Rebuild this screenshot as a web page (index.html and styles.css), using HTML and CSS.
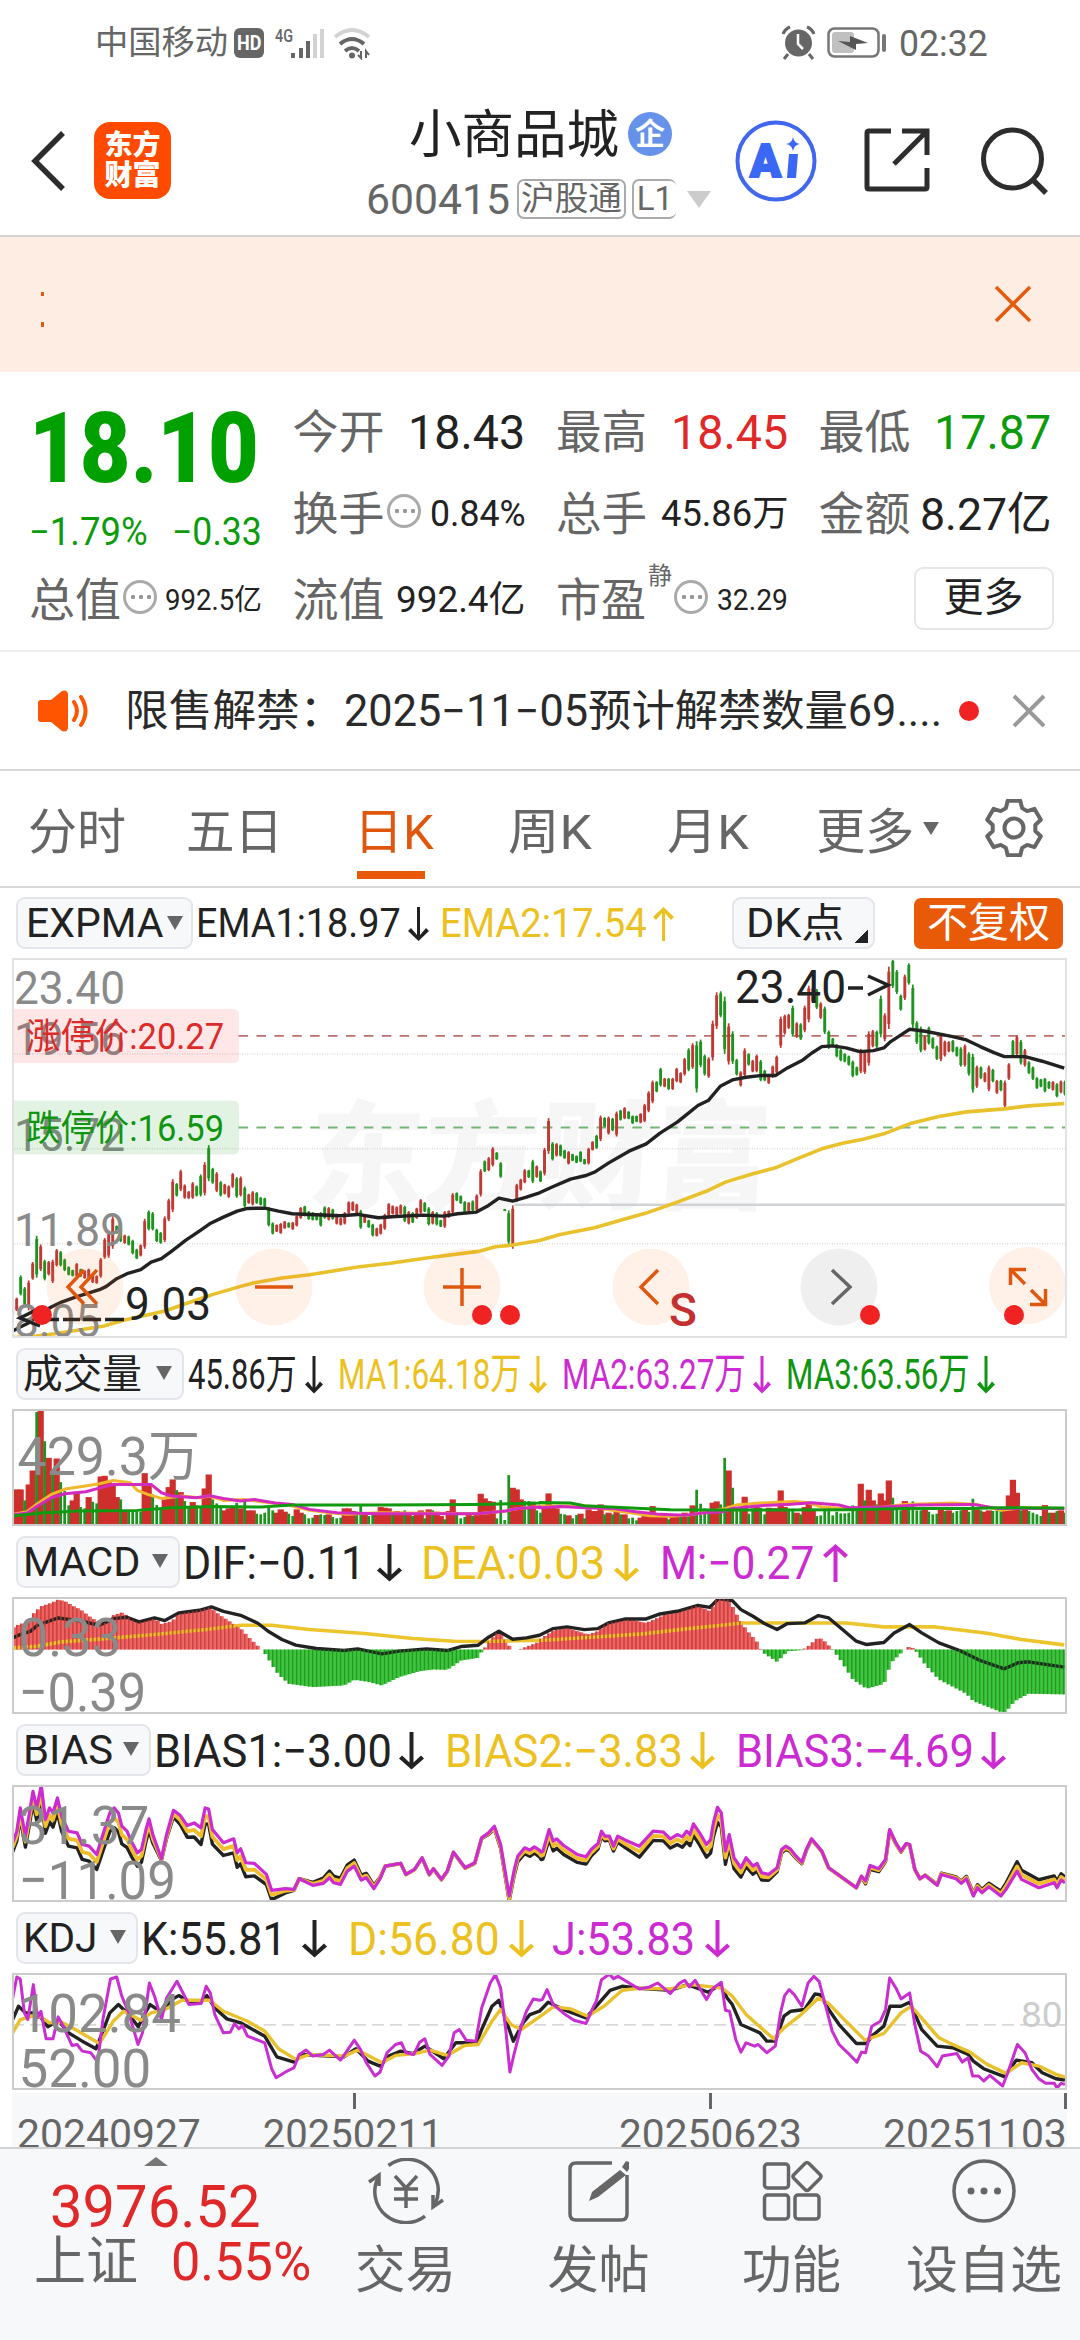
FILE: index.html
```html
<!DOCTYPE html>
<html lang="zh-CN">
<head>
<meta charset="utf-8">
<title>小商品城 600415</title>
<link rel="stylesheet" href="styles.css">
</head>
<body>
<div class="status">
  <span class="fit carrier" data-w="133">中国移动</span>
  <span class="hd"><i class="fit" data-w="24">HD</i></span>
  <svg class="net" width="100" height="38" viewBox="272 21 100 38">
    <text x="275" y="41" font-size="19" font-weight="500" textLength="18" lengthAdjust="spacingAndGlyphs" fill="#666">4G</text>
    <g fill="#666"><rect x="291" y="52" width="4" height="5"/><rect x="299" y="47" width="4" height="10"/><rect x="306" y="40" width="4" height="17"/></g>
    <g fill="#d2d2d2"><rect x="313" y="33" width="4" height="24"/><rect x="320" y="28" width="4" height="29"/></g>
    <g fill="none" stroke="#666" stroke-width="4"><path d="M335 36 Q352 22 369 36" stroke="#d2d2d2"/><path d="M340 43 Q352 33 364 43"/><path d="M345 50 Q352 44 359 50"/></g>
    <circle cx="352" cy="54.500" r="3" fill="#666"/><path d="M361 50v7l-3-3M366 57v-7l3 4" fill="none" stroke="#666" stroke-width="2"/>
  </svg>
  <svg class="power" width="108" height="36" viewBox="780 25 108 36">
    <circle cx="798.500" cy="43" r="13.500" fill="#666"/><path d="M798 34v10l5 5" stroke="#fff" stroke-width="2.500" fill="none"/>
    <path d="M783 34q2-5 7-7M814 34q-2-5-7-7M788 54l-4 5M809 54l4 5" stroke="#666" stroke-width="3" fill="none"/>
    <rect x="828.500" y="28.500" width="50" height="28" rx="6" fill="none" stroke="#777" stroke-width="2.500"/><rect x="832" y="32" width="22" height="21" rx="3" fill="#c0c0c0"/>
    <path d="M838 41l12 1v-6l18 7-12 1 0 6z" fill="#555"/><path d="M884 36v14" stroke="#777" stroke-width="4" stroke-linecap="round"/>
  </svg>
  <span class="fit clock" data-w="89">02:32</span>
</div>

<header class="head">
  <svg class="back" width="40" height="66" viewBox="0 0 40 66"><path d="M34 5 6 33 34 61" fill="none" stroke="#2d2d2d" stroke-width="5.500"/></svg>
  <div class="logo"><span>东方</span><span>财富</span></div>
  <div class="title">
    <div class="name"><span class="fit" data-w="210">小商品城</span><i class="ent">企</i></div>
    <div class="code"><span class="fit" data-w="144">600415</span><span class="tag"><span class="fit" data-w="101">沪股通</span></span><span class="tag cut"><span class="fit" data-w="36">L1</span></span><i class="tri"></i></div>
  </div>
  <svg class="ai" width="82" height="82" viewBox="0 0 82 82"><circle cx="41" cy="41" r="38.500" fill="#fff" stroke="#4067ee" stroke-width="4"/><text x="15" y="57" font-size="46" font-weight="900" textLength="31" lengthAdjust="spacingAndGlyphs" fill="#3a68f5" stroke="#3a68f5" stroke-width="2">A</text><path d="M54 34h9l-2 24h-9z" fill="#3a68f5"/><path d="M58 17q1 6 7 7-6 1-7 7-1-6-7-7 6-1 7-7z" fill="#3a68f5"/></svg>
  <svg class="share" width="70" height="70" viewBox="0 0 70 70"><path d="M28 5H6q-2 0-2 2V61q0 2 2 2H62q2 0 2-2V42M39 5H64V29M63 6 31 38" fill="none" stroke="#2d2d2d" stroke-width="5"/></svg>
  <svg class="search" width="70" height="70" viewBox="0 0 70 70"><circle cx="32.500" cy="33" r="29" fill="none" stroke="#2d2d2d" stroke-width="5"/><path d="M53 54 66 67" stroke="#2d2d2d" stroke-width="5.500"/></svg>
</header>

<div class="banner">
  <i class="marquee"></i>
  <svg width="38" height="38" viewBox="0 0 38 38"><path d="M2 2 36 36M36 2 2 36" stroke="#e55a0d" stroke-width="3.500"/></svg>
</div>

<section class="quote">
  <div class="price"><b class="fit" data-w="230">18.10</b></div>
  <div class="q r1"><span class="fit lab" data-w="92">今开</span><span class="fit num" data-w="117">18.43</span></div>
  <div class="q r1"><span class="fit lab" data-w="91">最高</span><span class="fit num up" data-w="117">18.45</span></div>
  <div class="q r1"><span class="fit lab" data-w="92">最低</span><span class="fit num down" data-w="117">17.87</span></div>
  <div class="q delta down"><span class="fit" data-w="119">−1.79%</span><span class="fit" data-w="90">−0.33</span></div>
  <div class="q r2"><span class="fit lab" data-w="92">换手</span><i class="info"></i><span class="fit n36" data-w="96">0.84%</span></div>
  <div class="q r2"><span class="fit lab" data-w="91">总手</span><span class="fit n36" data-w="127">45.86万</span></div>
  <div class="q r2"><span class="fit lab" data-w="92">金额</span><span class="fit n46" data-w="132">8.27亿</span></div>
  <div class="q r3"><span class="fit lab" data-w="92">总值</span><i class="info"></i><span class="fit n28" data-w="97">992.5亿</span></div>
  <div class="q r3"><span class="fit lab" data-w="92">流值</span><span class="fit n36" data-w="129">992.4亿</span></div>
  <div class="q r3"><span class="fit lab" data-w="90">市盈</span><sup>静</sup><i class="info"></i><span class="fit n28" data-w="71">32.29</span></div>
  <div class="q r3 right"><button class="more">更多</button></div>
</section>

<div class="notice">
  <svg class="horn" width="52" height="42" viewBox="0 0 52 42"><path d="M3 10h10L24 1q5-2 6 3v34q-1 5-6 3L13 32H3q-3 0-3-3V13q0-3 3-3z" fill="#ff5500"/><path d="M36 12q6 9 0 18M43 7q9 14 0 28" fill="none" stroke="#ff5500" stroke-width="4" stroke-linecap="round"/></svg>
  <span class="fit headline" data-w="219">限售解禁：</span><span class="fit headline" data-w="598">2025−11−05预计解禁数量69....</span>
  <i class="dot"></i>
  <svg width="34" height="34" viewBox="0 0 34 34"><path d="M2 2 32 32M32 2 2 32" stroke="#999" stroke-width="4"/></svg>
</div>

<nav class="tabs">
  <span class="fit" data-w="98">分时</span><span class="fit" data-w="97">五日</span><span class="on"><span class="fit" data-w="80">日K</span></span><span class="fit" data-w="84">周K</span><span class="fit" data-w="82">月K</span>
  <span class="drop"><span class="fit" data-w="98">更多</span><i class="tri"></i></span>
  <svg width="58" height="58" viewBox="0 0 58 58"><path d="M22.700 1.700H35.300L37.100 9.100 42.200 12.100 49.500 9.900 55.800 20.800 50.300 26V32L55.800 37.200 49.500 48.100 42.200 45.900 37.100 48.900 35.300 56.300H22.700L20.900 48.900 15.800 45.900 8.500 48.100 2.200 37.200 7.700 32V26L2.200 20.800 8.500 9.900 15.800 12.100 20.900 9.100z" fill="none" stroke="#666" stroke-width="4" stroke-linejoin="round"/><circle cx="29" cy="29" r="9.500" fill="none" stroke="#666" stroke-width="4"/></svg>
</nav>

<main class="charts">
  <div class="row expma">
    <span class="pill p0"><span class="fit" data-w="137">EXPMA</span><i class="tri"></i></span>
    <span class="val e1"><span class="fit" data-w="205">EMA1:18.97</span><i class="arr"></i></span>
    <span class="val e2 yel"><span class="fit" data-w="207">EMA2:17.54</span><i class="arr upw"></i></span>
    <span class="pill dk"><span class="fit" data-w="98">DK点</span></span>
    <span class="adj"><span class="fit" data-w="123">不复权</span></span>
  </div>
  <div class="plot main">
    <svg class="layer" id="kline" viewBox="36 52 3064 1141" preserveAspectRatio="none"></svg>
    <svg class="layer" viewBox="12 958 1055 380">
      <g fill="#8a8a8a" font-size="47">
        <text x="14" y="1004" textLength="111" lengthAdjust="spacingAndGlyphs">23.40</text><text x="14" y="1055" textLength="111" lengthAdjust="spacingAndGlyphs">19.56</text>
        <text x="14" y="1151" textLength="111" lengthAdjust="spacingAndGlyphs">15.72</text><text x="14" y="1246" textLength="111" lengthAdjust="spacingAndGlyphs">11.89</text>
        <text x="14" y="1337" textLength="86" lengthAdjust="spacingAndGlyphs">8.05</text>
      </g>
      <path d="M12 1009H233q6 0 6 6v42q0 6-6 6H12z" fill="#ff2020" opacity=".11"/><path d="M12 1100.500H233q6 0 6 6v42q0 6-6 6H12z" fill="#10a020" opacity=".12"/>
      <g font-size="36"><text x="26" y="1049" textLength="198" lengthAdjust="spacingAndGlyphs" fill="#dd2a2a">涨停价:20.27</text><text x="26" y="1141" textLength="198" lengthAdjust="spacingAndGlyphs" fill="#109510">跌停价:16.59</text></g>
      <text x="125" y="1320" font-size="47" textLength="86" lengthAdjust="spacingAndGlyphs" fill="#222">9.03</text>
      <path d="M40 1308 20 1318 40 1326M45 1319.500H59M63 1319.500H80M83 1319.500H101M105 1319.500H124" fill="none" stroke="#222" stroke-width="3.500"/>
      <text x="735" y="1003" font-size="47" textLength="111" lengthAdjust="spacingAndGlyphs" fill="#222">23.40</text><path d="M848 988H863M868 976 888 985 868 995" fill="none" stroke="#222" stroke-width="3.500"/>
      <g fill="#ff6a20" fill-opacity=".1"><circle cx="85" cy="1287" r="38.500"/><circle cx="274" cy="1287" r="38.500"/><circle cx="462" cy="1287" r="38.500"/><circle cx="651" cy="1287" r="38.500"/><circle cx="839" cy="1287" r="38.500" fill="#666"/><path d="M1066 1287A38.500 38.500 0 1 1 1066 1284z"/></g>
      <g fill="none" stroke="#e0580f" stroke-width="3.500"><path d="M84 1270 68 1287 84 1304M97 1270 81 1287 97 1304M255 1287H293M443 1287H481M462 1268V1306M658 1270 641 1287 658 1304M1026 1269.500H1010.500V1285M1011 1270 1025 1284M1030 1304.500H1045.500V1289M1045 1304 1031 1290"/><path d="M832 1270 850 1287 832 1304" stroke="#666"/></g>
      <g fill="#f02222"><circle cx="42" cy="1315" r="10"/><circle cx="482" cy="1315" r="10"/><circle cx="510" cy="1315" r="10"/><circle cx="870" cy="1315" r="10"/><circle cx="1014" cy="1315" r="10"/></g>
      <text x="669" y="1326" font-size="46" font-weight="500" fill="#c43030">S</text>
    </svg>
  </div>

  <div class="row">
    <span class="pill p1"><span class="fit" data-w="119">成交量</span><i class="tri"></i></span>
    <span class="val v0"><span class="fit" data-w="109">45.86万</span><i class="arr sm"></i></span>
    <span class="val v1 yel"><span class="fit" data-w="184">MA1:64.18万</span><i class="arr sm"></i></span>
    <span class="val v1 mag"><span class="fit" data-w="184">MA2:63.27万</span><i class="arr sm"></i></span>
    <span class="val v1 grn"><span class="fit" data-w="184">MA3:63.56万</span><i class="arr sm"></i></span>
  </div>
  <div class="plot sub"><svg class="layer" id="vol" viewBox="36 13 3064 352" preserveAspectRatio="none"></svg>
    <svg class="layer" viewBox="12 1409 1055 118"><text x="13" y="1476" font-size="55" textLength="184" lengthAdjust="spacingAndGlyphs" fill="#8a8a8a">429.3万</text></svg></div>

  <div class="row">
    <span class="pill p2"><span class="fit" data-w="117">MACD</span><i class="tri"></i></span>
    <span class="val m1"><span class="fit" data-w="182">DIF:−0.11</span><i class="arr"></i></span>
    <span class="val m2 yel"><span class="fit" data-w="184">DEA:0.03</span><i class="arr"></i></span>
    <span class="val m3 mag"><span class="fit" data-w="154">M:−0.27</span><i class="arr upw"></i></span>
  </div>
  <div class="plot sub"><svg class="layer" id="macd" viewBox="36 577 3064 352" preserveAspectRatio="none"></svg>
    <svg class="layer" viewBox="12 1597 1055 118"><g font-size="55" fill="#8a8a8a"><text x="14" y="1657" textLength="104" lengthAdjust="spacingAndGlyphs">0.33</text><text x="14" y="1712" textLength="129" lengthAdjust="spacingAndGlyphs">−0.39</text></g></svg></div>

  <div class="row">
    <span class="pill p3"><span class="fit" data-w="90">BIAS</span><i class="tri"></i></span>
    <span class="val b1"><span class="fit" data-w="238">BIAS1:−3.00</span><i class="arr"></i></span>
    <span class="val b2 yel"><span class="fit" data-w="238">BIAS2:−3.83</span><i class="arr"></i></span>
    <span class="val b2 mag"><span class="fit" data-w="238">BIAS3:−4.69</span><i class="arr"></i></span>
  </div>
  <div class="plot sub"><svg class="layer" id="bias" viewBox="36 16 3064 352" preserveAspectRatio="none"></svg>
    <svg class="layer" viewBox="12 1785 1055 118"><g font-size="55" fill="#8a8a8a"><text x="14" y="1845" textLength="132" lengthAdjust="spacingAndGlyphs">31.37</text><text x="14" y="1900" textLength="159" lengthAdjust="spacingAndGlyphs">−11.09</text></g></svg></div>

  <div class="row">
    <span class="pill p4"><span class="fit" data-w="74">KDJ</span><i class="tri"></i></span>
    <span class="val k1"><span class="fit" data-w="146">K:55.81</span><i class="arr"></i></span>
    <span class="val k2 yel"><span class="fit" data-w="152">D:56.80</span><i class="arr"></i></span>
    <span class="val k3 mag"><span class="fit" data-w="143">J:53.83</span><i class="arr"></i></span>
  </div>
  <div class="plot sub"><svg class="layer" id="kdj" viewBox="36 580 3064 352" preserveAspectRatio="none"></svg>
    <svg class="layer" viewBox="12 1973 1055 118"><g font-size="55" fill="#8a8a8a"><text x="14" y="2033" textLength="164" lengthAdjust="spacingAndGlyphs">102.84</text><text x="14" y="2088" textLength="134" lengthAdjust="spacingAndGlyphs">52.00</text></g><text x="1025" y="2027" font-size="35" textLength="42" lengthAdjust="spacingAndGlyphs" fill="#ccc">80</text></svg></div>

  <div class="axis">
    <span class="fit" data-w="184">20240927</span><span class="mid a"><span class="fit" data-w="180">20250211</span></span><span class="mid b"><span class="fit" data-w="183">20250623</span></span><span class="end"><span class="fit" data-w="184">20251103</span></span>
  </div>
</main>

<footer class="bar">
  <div class="index">
    <i class="caret"></i>
    <b class="fit pts" data-w="211">3976.52</b>
    <div class="idx"><span class="fit" data-w="104">上证</span><b class="fit" data-w="140">0.55%</b></div>
  </div>
  <a class="act"><svg width="76" height="66" viewBox="368 2158 76 66"><g fill="none" stroke="#666" stroke-width="3.500"><path d="M388.500 2165.500A31 31 0 0 1 435 2204"/><path d="M425 2216A31 31 0 0 1 378.500 2177"/><path d="M369 2182 379 2175V2186M443 2200 433 2207V2195"/><path d="M395 2176 406 2188 417 2176M394 2189H418M394 2199H418M406 2188V2208"/></g></svg><span class="fit" data-w="101">交易</span></a>
  <a class="act"><svg width="66" height="66" viewBox="566 2158 66 66"><path d="M612 2163H576q-6 0-6 6V2214q0 6 6 6H621q6 0 6-6V2175" fill="none" stroke="#666" stroke-width="3.500"/><path d="M620 2170 626 2175 598 2197 589 2201 592 2192zM622 2167l4-6 3 1v7l-2 3z" fill="#666"/></svg><span class="fit" data-w="102">发帖</span></a>
  <a class="act"><svg width="66" height="66" viewBox="758 2158 66 66"><g fill="none" stroke="#666" stroke-width="3.500"><rect x="763.500" y="2164" width="24" height="24" rx="3"/><rect x="763.500" y="2195" width="24" height="24" rx="3"/><rect x="794" y="2195" width="24" height="24" rx="3"/><path d="M804 2163.500q2-2 4 0l11 11q2 2 0 4l-11 11q-2 2-4 0l-11-11q-2-2 0-4z"/></g></svg><span class="fit" data-w="99">功能</span></a>
  <a class="act"><svg width="66" height="66" viewBox="950 2158 66 66"><circle cx="983" cy="2191" r="30" fill="none" stroke="#666" stroke-width="3.500"/><g fill="#666"><circle cx="970" cy="2191" r="3.500"/><circle cx="983" cy="2191" r="3.500"/><circle cx="996.500" cy="2191" r="3.500"/></g></svg><span class="fit" data-w="156">设自选</span></a>
</footer>
<script src="script.js"></script>
</body>
</html>
```
FILE: styles.css
```css
* { box-sizing: border-box; }
body { margin: 0; width: 1080px; height: 2340px; overflow: hidden; background: #fff; color: #222; font-family: Roboto, "Noto Sans CJK SC", sans-serif; display: flex; flex-direction: column; line-height: 1; }
i, sup { font-style: normal; }
svg text { font-family: Roboto, "Noto Sans CJK SC", sans-serif; }
.fit { display: inline-block; flex: none; white-space: nowrap; transform-origin: 0 50%; }
.up { color: #e02828; }
.down { color: #0b9b0b; }
.yel { color: #ecc11f; }
.mag { color: #cb2bd0; }
.grn { color: #109510; }
.tri { display: inline-block; width: 0; height: 0; border: 9px solid transparent; border-bottom: 0; border-top: 14px solid #666; }

.status { height: 86px; flex: none; display: flex; align-items: center; padding-left: 95px; color: #666; }
.carrier { font-size: 33px; line-height: 1.5; }
.hd { width: 30px; height: 30px; margin-left: 6px; border-radius: 6px; background: #666; color: #fff; font-size: 21px; font-weight: 700; display: flex; align-items: center; justify-content: center; }
.net { margin: -4px 0 0 8px; }
.power { margin-left: 408px; }
.clock { font-size: 36px; margin-left: 11px; padding-top: 1px; }

.head { height: 151px; flex: none; display: flex; border-bottom: 2px solid #d2d2d2; }
.back { margin: 42px 0 0 29px; }
.logo { width: 77px; height: 77px; margin: 36px 0 0 25px; border-radius: 16px; background: #ff4a00; color: #fff; font-size: 28px; font-weight: 900; display: flex; flex-direction: column; align-items: center; justify-content: center; gap: 2px; }
.title { margin-left: 195px; width: 346px; }
.name { display: flex; margin: 24px 0 0 43px; font-size: 52px; }
.ent { width: 44px; height: 44px; border-radius: 50%; background: #6792ea; color: #fff; font-size: 30px; font-weight: 700; margin: 2px 0 0 9px; display: flex; align-items: center; justify-content: center; }
.code { display: flex; align-items: center; height: 44px; margin-top: 15px; color: #666; font-size: 43px; }
.tag { height: 40px; width: 109px; margin-left: 7px; border: 2px solid #aaa; border-radius: 7px; font-size: 33px; display: flex; align-items: center; justify-content: center; padding-bottom: 2px; }
.tag.cut { width: 44px; margin-left: 6px; border-right: 0; }
.code .tri { border-width: 17px 12px 0; border-top-color: #ccc; margin-left: 11px; }
.ai { margin: 34px 0 0 23px; }
.share { margin: 40px 0 0 46px; }
.search { margin: 40px 0 0 47px; }

.banner { height: 135px; flex: none; background: #fdede3; display: flex; align-items: center; justify-content: space-between; padding: 0 48px 2px 41px; }
.marquee { width: 3px; height: 35px; border-top: 4px solid #e55a0d; border-bottom: 5px solid #e55a0d; margin-top: 12px; }

.quote { height: 280px; flex: none; border-bottom: 2px solid #eee; display: grid; grid-template-columns: 233px 233px 232px 233px; column-gap: 30.500px; grid-template-rows: 100px 84px 84px; padding-left: 29px; align-items: center; }
.price { color: #00a000; font-size: 98px; font-weight: 700; padding: 28px 0 0; height: 131px; align-self: start; }
.q { display: flex; align-items: center; justify-content: space-between; }
.r1, .r2, .r3 { height: 84px; }
.r1 { margin-top: 20px; }
.r3 { margin-top: 4px; }
.lab { color: #666; font-size: 46px; }
.num { font-size: 49px; }
.n46 { font-size: 45px; }
.n36 { font-size: 36px; }
.n28 { font-size: 29px; }
.delta { font-size: 38px; padding-top: 35px; }
.info { width: 34px; height: 34px; flex: none; border: 3px solid #aaa; border-radius: 50%; margin: -6px auto 0 2px; background: radial-gradient(circle, #999 2px, transparent 2.500px) 3px 0 / 8px 28px; background-repeat: repeat-x; background-clip: content-box; padding: 0 2px; }
sup { font-size: 24px; color: #666; align-self: flex-start; margin: 6px 0 0 2px; line-height: 1; }
.right { justify-content: flex-end; }
.more { width: 140px; height: 63px; margin: -4px -2px 0 0; border: 2px solid #e6e6e6; border-radius: 9px; background: #fff; color: #222; font: 40px/1 Roboto, "Noto Sans CJK SC", sans-serif; padding: 0; }

.notice { height: 119px; flex: none; border-bottom: 2px solid #d8d8d8; display: flex; align-items: center; padding-left: 38px; }
.horn { margin-right: 35px; }
.headline { font-size: 43.500px; color: #2a2a2a; padding-top: 2px; }
.dot { width: 20px; height: 20px; border-radius: 50%; background: #f02222; margin: 0 33px 0 17px; }

.tabs { height: 117px; flex: none; border-bottom: 2px solid #d8d8d8; display: flex; align-items: center; padding: 7px 0 0 28px; color: #666; font-size: 49px; }
.tabs > * + * { margin-left: 60px; }
.on { color: #e0560c; height: 108px; display: flex; align-items: center; margin-left: 71px !important; background: linear-gradient(#e85808, #e85808) 3px 93px / 68px 8px no-repeat; }
.on + .fit { margin-left: 74px !important; }
.on + .fit + .fit { margin-left: 75px !important; }
.drop { display: flex; align-items: center; margin-left: 68px !important; }
.drop .tri { margin: -8px 0 0 9px; border-width: 13px 8px 0; }
.tabs svg { margin: -8px 0 0 46px !important; }

.charts { width: 1067px; padding-left: 12px; flex: none; }
.row { height: 71px; display: flex; align-items: center; font-size: 46px; }
.expma { height: 70px; font-size: 40px; }
.main { height: 380px; }
.sub { height: 117px; }
.plot { position: relative; }
.plot::after { content: ""; position: absolute; inset: 0; border: 2px solid #ccc; }
.main::after { border-color: #e2e2e2; }
.layer { position: absolute; left: 0; top: 0; width: 1055px; height: 100%; }
.pill { height: 52px; flex: none; margin-left: 4px; padding: 2px 10px 0 5px; border: 2px solid #e4e5ea; border-radius: 9px; background: #f7f8fa; font-size: 40px; display: flex; align-items: center; justify-content: space-between; }
.p0 { width: 177px; padding-left: 8px; }
.p1 { width: 168px; }
.p2 { width: 164px; }
.p3 { width: 135px; }
.p4 { width: 122px; }
.pill .tri { border-width: 14px 8.500px 0; margin-top: -3px; }
.p0 .tri { margin-right: -2px; }
.val { display: flex; flex: none; align-items: center; justify-content: space-between; margin-left: 4px; padding-top: 2px; }
.v0 { width: 135px; font-size: 42px; }
.v1 { width: 209px; margin-left: 15px; font-size: 43px; }
.e1 { width: 235px; margin-left: 3px; }
.e2 { width: 236px; margin-left: 9px; }
.m1 { width: 219px; margin-left: 3px; }
.m2 { width: 218px; margin-left: 19px; }
.m3 { width: 188px; margin-left: 21px; }
.b1 { width: 270px; margin-left: 3px; }
.b2 { width: 270px; margin-left: 21px; }
.k1 { width: 186px; margin-left: 3px; }
.k2 { width: 186px; margin-left: 21px; }
.k3 { width: 178px; margin-left: 18px; }
.arr { width: 25px; height: 38px; flex: none; background: currentColor; clip-path: polygon(10.500px 0, 14.500px 0, 14.500px 31px, 22px 24px, 25px 27px, 12.500px 38px, 0 27px, 3px 24px, 10.500px 31px); }
.arr.upw { transform: scaleY(-1); }
.expma .arr { height: 34px; clip-path: polygon(11px 0, 14px 0, 14px 28px, 20px 21px, 23px 24px, 12.500px 34px, 2px 24px, 5px 21px, 11px 28px); }
.arr.sm { width: 18px; clip-path: polygon(7.500px 0, 10.500px 0, 10.500px 32px, 15px 26px, 18px 29px, 9px 38px, 0 29px, 3px 26px, 7.500px 32px); }
.dk { width: 143px; margin-left: 56px; padding-left: 12px; background: linear-gradient(135deg, transparent 50%, #222 51%) 120px 30px / 14px 14px no-repeat #f7f8fa; }
.adj { width: 149px; height: 51px; flex: none; margin-left: 39px; border-radius: 7px; background: #e85a08; color: #fff; font-size: 41px; display: flex; align-items: center; justify-content: center; }
.axis { height: 57px; overflow: hidden; display: flex; padding-top: 25px; font-size: 40px; color: #666; background: linear-gradient(#666, #666) 341px 3px / 3px 16px no-repeat, linear-gradient(#666, #666) 697px 3px / 3px 16px no-repeat, linear-gradient(#666, #666) 1052px 3px / 3px 16px no-repeat, linear-gradient(#f7f8fa, #f7f8fa) 0 3px / 100% 100% no-repeat; }
.axis > :first-child { margin-left: 5px; }
.mid.a { margin-left: 62px; }
.mid.b { margin-left: 176px; }
.end { margin-left: 81px; }

.bar { flex: 1; border-top: 2px solid #d0d2d4; background: #f7f8fa; display: flex; color: #666; font-size: 51px; }
.bar b { font-weight: 400; color: #e02828; }
.index { width: 310px; padding-left: 34px; display: flex; flex-direction: column; }
.caret { width: 0; border: 12px solid transparent; border-top: 0; border-bottom: 9px solid #777; margin: 8px 0 0 110px; }
.pts { font-size: 59px; margin: 11px 0 0 16px; align-self: flex-start; }
.idx { display: flex; align-items: center; justify-content: space-between; margin-right: -2px; font-size: 53px; }
.act { display: flex; flex-direction: column; align-items: center; width: 193px; padding-top: 9px; gap: 21px; flex: none; }
.act:last-child { width: 192px; }
```
FILE: script.js
```js
(function () {
// Fit each label to the width of its column.
document.querySelectorAll('.fit').forEach(function (el) {
  var w = +el.dataset.w, n = el.offsetWidth;
  el.style.transform = 'scaleX(' + w / n + ')';
  el.style.marginRight = (w - n) + 'px';
});

var RED = '#bf3a35', GREEN = '#1f931f', HALF = 1568;

function put(id, html) { document.getElementById(id).innerHTML += html; }
function rect(x, y, w, h, f) { return '<rect x="' + x.toFixed(1) + '" y="' + y + '" width="' + w + '" height="' + h + '" fill="' + f + '"/>'; }
function points(left, right) {
  function read(s, dx) { return s.trim().split(/\s+/).map(function (p) { p = p.split(','); return [+p[0] + dx, +p[1]]; }); }
  return read(left, 0).concat(read(right, HALF));
}
function line(pts, color, w, extra) {
  return '<polyline points="' + pts.map(function (p) { return p[0] + ',' + p[1].toFixed(1); }).join(' ') + '" fill="none" stroke="' + color + '" stroke-width="' + w + '" stroke-linejoin="round" vector-effect="non-scaling-stroke" ' + (extra || '') + '/>';
}
function at(pts, x) {
  for (var i = 1; i < pts.length; i++) if (pts[i][0] >= x) {
    var a = pts[i - 1], b = pts[i];
    return a[1] + (b[1] - a[1]) * Math.max(0, (x - a[0]) / (b[0] - a[0] || 1));
  }
  return pts[pts.length - 1][1];
}
function hline(y, x1, color, w, dash) { return line([[x1, y], [3100, y]], color, w, dash ? 'stroke-dasharray="' + dash + '"' : ''); }
function spread(list, x0, x1, fn) {
  list = list.trim().split(/\s+/);
  return list.map(function (t, i) { return fn(x0 + (x1 - x0) * i / (list.length - 1), t); }).join('');
}

// Daily candles
var k1 = 'r1095-1125 r1072-1112 g1005-1065 g1040-1100 r1020-1110 r965-1018 g886-1012 r912-992 g958-1020 r962-1005 r958-1028 r926-978 g932-978 g955-992 g978-1005 g988-1008 r968-1010 g985-1010 r990-1015 r985-1018 r998-1028 r1005-1030 r953-1012 r893-955 r870-952 r828-925 g855-880 g860-905 r883-910 g886-915 g898-942 g925-956 r912-948 r835-925 g810-870 g815-870 g865-905 g875-910 r828-905 r775-842 r716-815 g728-768 r688-752 r732-775 r752-775 r725-775 g735-768 g702-768 r665-765 g614-722 g682-730 r695-755 g722-768 r730-762 r735-772 r698-742 g710-772 r708-768 g738-802 r760-790 r752-795 g755-790 g770-795 g772-800 g800-858 g846-882 r852-875 r848-880 r842-865 g846-862 r845-868 r825-858 r800-835 g796-828 g812-838 g815-840 g818-840 g815-858 g798-835 r800-840 g805-838 r820-852 r832-855 r815-852 r783-820 r783-812 r790-825 g808-865 r828-848 g838-862 g850-888 r862-888 r850-882 r820-868 r788-828 r795-822 r798-825 r792-822 g796-845 r812-852 g815-848 r802-835 r776-820 g785-815 g800-855 r812-852 g815-855 g838-860 r812-862 r810-832 r758-820 g756-782 g765-790 g782-818 r785-815 g780-812 r762-812 r686-768 g660-695 r650-692 r620-678 g635-658 g665-712 g806-812 g810-912 r795-925 r730-785 r715-750 r686-728 g688-712 g658-728 r675-712';
var k2 = 'g690-725 r622-705 r533-640 g605-660 r608-648 g612-648 g628-655 r632-672 g640-662 g645-668 g632-665 g655-672 r622-672 r602-630 g583-625 r525-602 g530-560 r528-582 g532-572 r513-588 g508-540 r500-536 g512-536 g525-550 g525-545 r518-548 r490-545 r452-515 r420-488 g422-455 g382-438 r412-440 g412-448 r412-448 r382-425 r395-428 r352-405 g323-392 r308-385 g302-456 g297-380 g342-405 r350-412 r240-360 r155-265 g152-230 g168-340 r248-372 g272-370 g355-405 r392-438 r323-410 g338-375 r358-395 r342-395 g358-422 g388-422 r400-430 r375-412 r345-400 r228-322 r222-282 r220-265 g195-288 r245-292 g248-298 r195-275 r135-245 r140-185 g145-205 r185-235 g198-280 g270-325 g292-318 g310-350 g325-362 g338-365 g345-375 g360-410 g378-405 r325-398 r330-400 r272-375 r268-320 g270-322 g165-290 r218-302 r78-265 g54-142 g88-160 g162-210 r102-178 g68-132 g132-262 g242-310 g258-335 r285-330 g258-312 g290-325 g315-358 r280-362 r300-348 r302-335 g298-335 g318-348 g320-378 r312-378 g335-405 g340-456 r375-442 g378-415 r395-425 r375-452 g385-425 r418-460 g418-452 r420-502 r368-418 g298-350 r285-345 g298-372 r325-378 g362-400 g378-418 g410-445 g415-440 g412-455 g422-445 r422-450 g428-470 r420-458 g420-465';
function candle(x, t) {
  var c = t[0] === 'r' ? RED : GREEN, p = t.slice(1).split('-'), hi = +p[0], h = p[1] - hi;
  return rect(x - 2.5, hi, 5, h, c) + rect(x - 4.2, hi + h * 0.08, 8.4, h * 0.84, c);
}
put('kline',
  '<text transform="translate(890 778) skewX(-3)" font-size="355" font-weight="900" textLength="1345" lengthAdjust="spacingAndGlyphs" fill="#f6f6f6">东方财富</text>' +
  hline(340, 36, '#ccc', 1, '1 1.5') + hline(625, 36, '#ccc', 1, '1 1.5') + hline(910, 36, '#ccc', 1, '1 1.5') +
  hline(793, 1495, '#d0d3d6', 2.5) +
  hline(286, 694, '#b8706c', 1.8, '9.5 8.4') + hline(561, 694, '#74b674', 1.8, '9.5 8.4') +
  spread(k1, 38, 1560, candle) + spread(k2, HALF + 3, HALF + 1526, candle) +
  line(points('38,1192 100,1188 160,1180 300,1158 360,1140 480,1112 540,1090 620,1062 700,1038 740,1027 820,1013 900,1003 1040,980 1140,968 1240,953 1390,933 1440,919 1490,914 1568,900',
    '0,900 60,882 160,862 240,838 310,818 400,785 490,750 540,725 620,700 690,680 760,650 820,625 880,608 940,596 1000,580 1080,548 1160,528 1240,514 1350,505 1420,496 1524,489'), '#e8c12c', 3.6) +
  line(points('38,1172 60,1160 90,1145 110,1125 150,1100 180,1085 220,1070 290,1048 310,1038 340,1015 370,1000 410,988 440,965 470,955 500,932 540,900 580,872 610,850 650,830 690,812 720,804 770,803 810,812 850,820 900,822 990,826 1040,822 1100,832 1150,828 1230,824 1290,827 1330,820 1385,815 1420,795 1450,773 1490,782 1530,770 1568,757',
    '0,757 40,738 90,716 135,705 160,695 200,668 260,632 310,610 350,578 400,545 430,520 460,495 490,480 525,437 560,418 600,410 640,405 685,405 720,382 765,358 790,338 820,318 850,316 890,322 930,333 970,330 1000,322 1020,303 1050,283 1075,266 1120,272 1160,280 1200,288 1240,298 1280,318 1320,336 1350,348 1410,348 1460,362 1524,383'), '#222', 3.4));

// Volume
var v1 = 'r330 r255 r255 g288 r240 r198 g22 r15 g110 r160 g200 r162 g233 g260 g303 r288 r262 g308 g312 r278 g292 g297 r216 r214 r232 r238 r278 g285 r320 g320 g322 g322 g322 r206 r240 g270 g302 g312 r285 r248 r225 g257 r263 g290 g305 r293 g303 g308 r252 r210 g285 g297 g305 r318 r312 r308 g295 r312 g283 r318 r318 g328 g330 g325 g305 g318 r325 r315 r322 g328 g335 r315 r325 g330 g342 g340 r332 g330 g332 r330 g338 g342 g340 r312 r312 r320 g322 g305 r332 g335 g330 r325 r308 r310 r312 g322 r320 r322 g318 r325 g335 r330 r318 g342 r315 g318 r322 r335 g345 r320 r285 g332 g342 g338 r330 g335 r325 r268 r282 r290 r292 g342 g287 g347 g212 r250 r255 r285 g290 g290 r292 g318';
var v2 = 'g325 r305 r267 r305 r312 g328 g330 r333 g342 g332 r328 g342 r315 r320 r320 r300 g330 r325 g330 r322 g330 r330 g342 g340 g348 r340 r335 r325 r305 r332 r335 r338 g345 r332 r332 g335 r325 g330 r303 g256 g298 g312 g315 r295 r291 g300 g160 r198 g250 g310 g312 r277 g328 g312 r308 g310 g330 r310 r312 r312 r258 r308 g318 g320 r325 g330 r308 r292 r318 g335 g333 g318 g320 g333 g322 g327 g327 g325 g303 g318 r238 g288 r256 r288 g300 r267 r288 r228 g280 g312 g318 r290 g312 g291 g318 g318 r315 g322 g330 g328 r315 g320 r318 g325 g320 g318 r312 g322 g283 r315 g318 r322 r318 g320 g318 g320 r315 r273 r226 r265 g318 r312 g320 g325 g330 g335 r302 g325 r325 g320 r318 g325';
function volume(pick) {
  return function (x, t) {
    if (t[0] !== pick) return '';
    var y = +t.slice(1);
    return pick === 'r' ? rect(Math.max(38, x - 9), y, 18, 363 - y, '#cf2f2c') : rect(x - 4, y, 8, 361 - y, '#1f931f');
  };
}
put('vol', spread(v1, 38, 1560, volume('r')) + spread(v2, HALF + 3, HALF + 1526, volume('r')) +
  spread(v1, 38, 1560, volume('g')) + spread(v2, HALF + 3, HALF + 1526, volume('g')) +
  line(points('38,330 80,322 110,298 150,270 190,254 240,246 290,238 330,228 380,235 400,258 430,270 470,282 530,275 580,280 610,275 650,288 710,285 760,292 830,300 900,318 960,325 1010,330 1100,325 1390,328 1470,320 1500,313 1568,306',
    '0,305 60,305 140,305 210,318 270,326 320,334 380,336 430,333 540,312 570,302 640,296 740,291 780,295 820,308 880,312 1000,308 1060,300 1200,296 1270,300 1340,318 1400,310 1524,312'), '#f3b72e', 3) +
  line(points('38,332 80,326 110,305 150,280 190,268 250,262 300,248 330,240 440,240 470,265 500,275 570,280 610,274 650,282 700,290 740,285 800,296 850,300 900,315 980,325 1100,328 1390,328 1470,320 1500,313 1568,308',
    '0,310 60,306 130,310 210,312 280,322 350,330 420,333 480,325 530,322 560,312 640,304 720,300 790,295 870,302 900,310 1000,308 1100,302 1260,300 1330,312 1524,312'), '#d32bc0', 3) +
  line(points('38,335 120,326 230,320 400,318 500,310 620,306 760,308 850,302 1100,302 1380,300 1568,296',
    '0,294 90,296 130,304 250,310 380,316 540,317 900,316 1060,312 1250,312 1330,310 1524,311'), '#109a10', 3));

// MACD
var hist = points('36,672 50,662 85,650 97,628 120,605 150,595 170,585 190,590 215,605 235,615 260,635 290,655 310,655 330,632 355,624 380,640 405,655 450,642 470,658 500,650 520,628 560,620 590,615 610,608 640,632 670,652 700,672 720,695 740,715 760,735 775,752 790,780 810,810 840,838 910,848 1000,843 1030,826 1070,832 1110,843 1160,818 1220,800 1260,795 1300,796 1340,768 1390,760 1400,740 1408,732 1420,712 1450,680 1475,715 1485,735 1510,735 1567,712',
  '0,705 40,678 80,670 140,690 165,682 200,655 260,645 310,655 360,632 410,622 460,602 495,620 515,585 530,577 550,585 575,635 600,675 630,710 640,730 650,745 690,772 720,740 760,737 775,730 810,698 830,712 850,735 870,760 910,825 950,853 1000,838 1020,775 1050,745 1060,735 1068,735 1074,722 1085,732 1095,742 1120,780 1160,825 1240,868 1260,890 1350,927 1380,890 1420,868 1526,870');
var bars = '', stripes = '';
for (var i = 0; i < 264; i++) {
  var x = 36 + i * 11.6, y = at(hist, x + 5), up = y < 735;
  var y0 = Math.min(y, 735).toFixed(1), h = Math.abs(y - 735).toFixed(1);
  bars += rect(x, y0, 11.8, h, up ? '#f26262' : '#3cc63c');
  stripes += rect(x, y0, 5, h, up ? '#bd3a36' : '#169016');
}
put('macd', bars +
  line(points('38,730 110,725 180,712 300,703 450,690 600,675 700,662 790,662 900,675 1060,687 1200,702 1320,710 1400,711 1568,707', '0,708 150,698 300,688 400,676 500,665 590,655 890,655 1000,667 1150,667 1300,686 1400,705 1524,721'), '#ecc42c', 3.6) +
  line(points('38,700 60,690 90,680 110,662 170,640 230,648 290,662 330,642 370,638 405,652 450,640 480,648 520,625 580,617 615,607 650,620 700,632 750,656 780,680 820,705 860,722 920,732 1000,738 1040,733 1110,748 1160,740 1240,733 1300,738 1340,726 1390,722 1420,698 1450,680 1490,704 1530,700 1568,692',
    '0,692 40,672 80,667 130,675 170,672 200,655 250,643 310,643 350,628 400,620 460,602 495,608 520,582 560,588 585,615 620,635 650,655 690,675 720,657 770,655 810,633 840,640 880,675 920,710 950,720 1000,714 1030,685 1075,660 1110,685 1160,715 1220,738 1280,768 1350,793 1390,775 1420,772 1524,788'), '#222', 3.4) +
  '<g opacity=".75">' + stripes + '</g>');

// BIAS: the three lines share one shape and spread apart by the period gap.
var bias = points('38,190 50,155 60,85 75,170 85,110 97,35 108,85 121,17 133,120 145,85 155,100 168,55 180,110 200,155 225,160 240,195 260,200 282,225 300,165 320,100 333,85 345,100 355,140 370,155 385,190 400,220 412,210 425,150 434,118 445,165 470,238 485,165 505,92 525,108 545,138 565,130 585,145 597,85 607,88 618,150 650,190 680,178 690,220 700,208 715,250 740,252 775,285 790,333 830,328 855,330 870,298 910,318 940,312 958,295 970,310 990,315 1010,275 1030,260 1050,302 1065,295 1087,328 1105,298 1120,260 1165,252 1180,285 1205,270 1227,235 1248,285 1260,268 1283,300 1300,275 1318,218 1352,265 1380,250 1400,175 1420,160 1437,140 1455,195 1480,350 1495,270 1505,230 1525,205 1540,212 1553,202 1568,212',
  '5,218 10,215 28,150 40,185 50,178 70,198 110,225 135,232 150,210 170,192 180,155 190,170 203,170 215,200 227,170 250,182 290,200 330,155 360,158 380,178 400,165 415,172 427,155 437,165 447,133 465,160 485,195 497,180 505,130 517,83 528,100 540,215 551,165 565,235 585,265 600,235 620,260 632,252 645,280 665,285 690,265 703,210 715,200 728,208 745,230 762,248 775,210 790,178 820,215 840,265 880,295 920,325 935,290 947,305 960,258 985,268 1005,240 1017,150 1035,190 1050,215 1065,192 1075,195 1090,270 1105,298 1120,288 1155,318 1167,285 1210,298 1225,312 1240,298 1260,350 1272,325 1285,340 1305,322 1340,350 1355,330 1387,275 1400,300 1450,325 1495,310 1503,325 1515,302 1526,310');
var gap = points('38,27 121,40 180,45 282,45 333,60 400,40 434,35 470,5 505,20 585,50 650,38 700,45 790,28 855,3 958,-20 1030,-18 1087,-10 1120,0 1400,2 1480,15 1567,20', '28,30 135,22 203,12 290,33 350,25 485,38 517,45 585,28 645,22 690,12 790,2 920,0 960,12 1017,5 1100,0 1330,-12 1387,-28 1450,-24 1526,-18');
function shifted(f) { return bias.map(function (p) { return [p[0], Math.min(364, p[1] + f * at(gap, p[0]))]; }); }
put('bias', line(shifted(1), '#222', 3.4) + line(shifted(0.5), '#f0bd2c', 3.8) + line(bias, '#cb2bd0', 3.2));

// KDJ
put('kdj', hline(736, 36, '#ccc', 1.2, '12 6') +
  line(points('38,720 55,680 75,700 110,700 140,742 170,722 200,760 240,785 280,808 300,755 320,700 345,675 375,705 403,742 420,705 437,675 470,698 500,660 520,648 550,665 585,668 602,648 625,685 660,718 700,730 770,770 805,832 855,848 880,825 930,828 1000,832 1035,808 1070,845 1105,860 1130,830 1165,815 1200,823 1235,800 1290,838 1325,790 1385,790 1400,750 1430,680 1450,662 1470,720 1492,785 1520,730 1540,705 1568,695',
    '0,695 25,668 70,690 135,715 165,680 205,632 240,620 290,626 380,632 430,615 490,638 525,615 545,655 560,675 585,735 640,760 660,785 685,785 710,710 730,695 770,690 800,643 815,645 840,690 870,735 920,792 950,792 965,770 1000,740 1018,680 1050,680 1075,668 1110,750 1155,800 1200,805 1245,825 1260,845 1290,868 1350,892 1385,842 1430,850 1460,880 1500,898 1526,902'), '#222', 3.4) +
  line(points('38,760 60,720 110,705 145,730 180,728 220,750 290,792 330,725 360,695 410,722 440,700 480,690 530,662 610,662 650,695 720,725 770,755 810,808 860,840 900,825 1000,830 1040,812 1110,850 1150,828 1210,822 1250,812 1300,828 1350,798 1390,795 1430,725 1455,690 1485,735 1515,750 1568,712',
    '0,712 40,682 90,688 140,710 190,678 240,632 290,626 380,628 440,615 530,625 560,650 600,705 640,742 680,778 710,745 760,705 810,655 840,672 880,715 945,782 1000,762 1050,700 1080,680 1120,728 1160,775 1200,795 1250,818 1300,855 1355,882 1400,850 1450,860 1500,885 1526,893'), '#e8c12c', 3.4) +
  line(points('38,655 50,592 60,598 72,700 82,720 98,615 110,715 120,695 135,778 155,778 170,712 185,740 210,798 225,795 240,815 265,820 285,848 300,720 322,598 340,592 355,650 375,700 402,795 415,760 435,610 450,650 470,720 485,655 515,605 530,635 550,675 585,672 600,620 612,640 625,705 650,760 670,758 682,733 695,748 705,738 720,770 770,790 790,868 803,895 835,875 855,865 870,825 890,812 910,830 940,825 958,812 990,842 1005,820 1030,782 1048,810 1065,850 1090,890 1105,878 1125,820 1150,795 1167,790 1180,820 1203,825 1220,788 1235,778 1250,825 1285,858 1305,830 1320,760 1335,750 1355,782 1383,785 1400,685 1425,610 1440,585 1455,625 1470,750 1482,878 1495,820 1515,740 1530,695 1550,658 1568,662',
    '0,662 8,660 22,630 40,675 75,705 100,722 135,732 155,685 165,665 180,600 203,584 215,597 228,590 260,610 290,628 320,622 343,610 380,642 405,612 422,602 435,622 452,602 465,625 485,660 505,625 528,608 540,692 552,695 570,780 585,818 600,790 625,800 635,795 660,820 685,800 700,700 712,648 725,630 740,645 762,680 780,610 797,590 812,605 830,675 850,755 870,795 900,825 922,848 935,818 947,820 965,740 990,725 1005,690 1017,595 1035,625 1050,658 1075,640 1090,735 1107,815 1130,830 1155,862 1170,830 1212,822 1228,848 1245,835 1258,890 1275,890 1290,905 1308,888 1345,920 1360,880 1388,795 1410,820 1430,870 1450,898 1470,912 1495,912 1503,926 1515,912 1526,915'), '#c92fd0', 3));
})();
```
